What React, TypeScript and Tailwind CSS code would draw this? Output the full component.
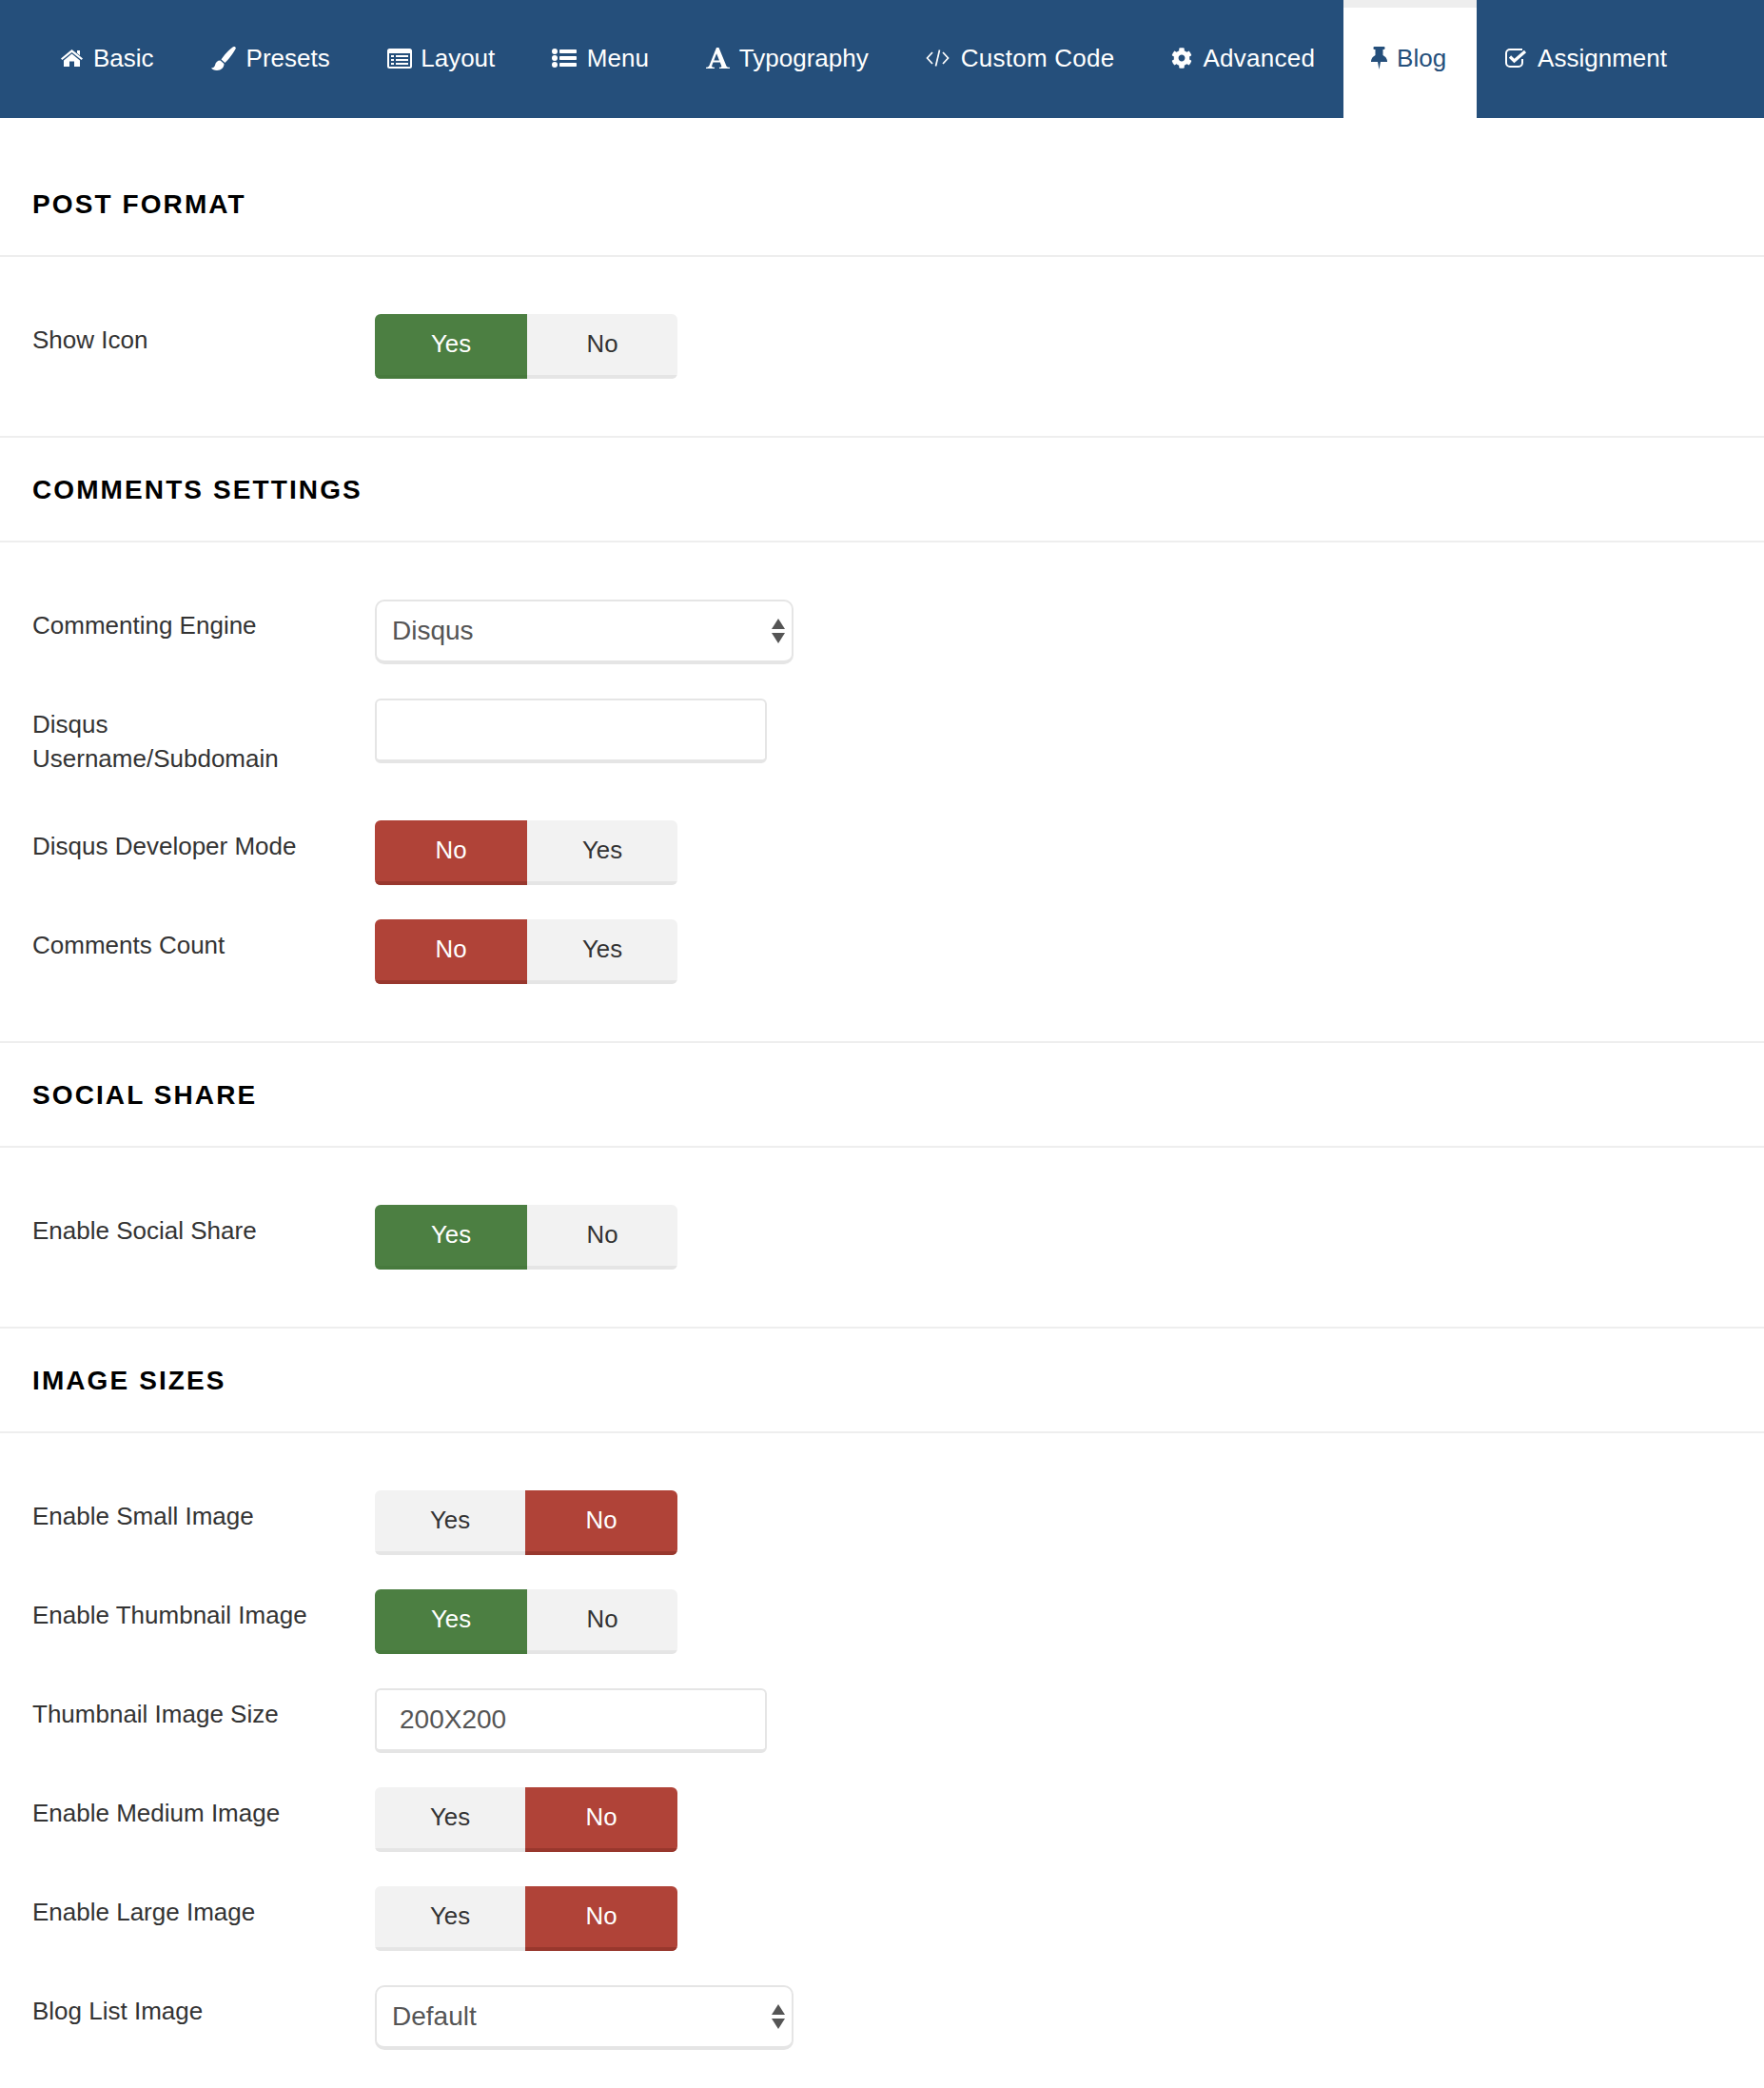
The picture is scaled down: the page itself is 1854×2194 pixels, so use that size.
import React from "react";
import { FaCog } from "react-icons/fa";

const font = "font-['Liberation_Sans',Arial,sans-serif]";

const HomeIcon = () => (
  <svg className="w-[23px] h-[18px] mr-[11px] shrink-0" viewBox="0 0 23 18" fill="currentColor">
    <path d="M11.5 0 L23 9.5 L21.6 11 L11.5 3 L1.4 11 L0 9.5 Z" />
    <path d="M17 1h3v5.3l-3-2.5z" />
    <path d="M11.5 4.6 L20 11.6 V18 H14 V12.5 H9 V18 H3 V11.6 Z" />
  </svg>
);

const BrushIcon = () => (
  <svg className="w-[26px] h-[25px] mr-[11px] shrink-0" viewBox="0 0 26 25" fill="currentColor">
    <path d="M24 0 C25.5 0 26.3 1.2 25.5 2.6 C23 7 18 14 14.5 17 L10.5 13.5 C13 9.5 19 3 22 1 C22.7 .4 23.3 0 24 0Z" />
    <path d="M9.5 14.5 L13.5 18 C13.5 22 10.5 25 6 25 C3 25 1 24 0 22.5 C2 22.5 3.5 21.5 4 19.5 C4.5 16.5 6.5 14.5 9.5 14.5Z" />
  </svg>
);

const ListAltIcon = () => (
  <svg className="w-[26px] h-[21px] mr-[9.5px] shrink-0" viewBox="0 0 26 21" fill="currentColor">
    <path
      fillRule="evenodd"
      d="M2.5 0 H23.5 A2.5 2.5 0 0 1 26 2.5 V18.5 A2.5 2.5 0 0 1 23.5 21 H2.5 A2.5 2.5 0 0 1 0 18.5 V2.5 A2.5 2.5 0 0 1 2.5 0Z M2 5 V18.5 A.5 .5 0 0 0 2.5 19 H23.5 A.5 .5 0 0 0 24 18.5 V5Z"
    />
    <rect x="4" y="7" width="3" height="2" />
    <rect x="4" y="11" width="3" height="2" />
    <rect x="4" y="15" width="3" height="2" />
    <rect x="9" y="7" width="13" height="2" />
    <rect x="9" y="11" width="13" height="2" />
    <rect x="9" y="15" width="13" height="2" />
  </svg>
);

const ListIcon = () => (
  <svg className="w-[26px] h-[20px] mr-[10.5px] shrink-0" viewBox="0 0 26 20" fill="currentColor">
    <circle cx="3" cy="3" r="3" />
    <circle cx="3" cy="10" r="3" />
    <circle cx="3" cy="17" r="3" />
    <rect x="8" y="1" width="18" height="4" rx="0.8" />
    <rect x="8" y="8" width="18" height="4" rx="0.8" />
    <rect x="8" y="15" width="18" height="4" rx="0.8" />
  </svg>
);

const FontIcon = () => (
  <svg className="w-[25px] h-[22px] mr-[10px] shrink-0" viewBox="0 0 25 22" fill="currentColor">
    <path
      fillRule="evenodd"
      d="M11 0 H13.5 L21.5 19.5 C22 20.4 23 20.7 25 20.8 V22 H14 V20.8 C16 20.7 16.6 20.3 16.2 19.2 L14.8 15.5 H7.5 L6.2 19 C5.8 20.2 6.8 20.7 9 20.8 V22 H0 V20.8 C1.8 20.7 2.8 20.2 3.4 19 Z M8.3 13.5 H14 L11.1 6.2 Z"
    />
  </svg>
);

const CodeIcon = () => (
  <svg className="w-[25px] h-[18px] mr-[12px] shrink-0" viewBox="0 0 25 18" fill="none" stroke="currentColor" strokeWidth="1.7">
    <path d="M7 3 L1.5 9 L7 15" />
    <path d="M18 3 L23.5 9 L18 15" />
    <path d="M14.5 .5 L10.5 17.5" />
  </svg>
);

const PinIcon = () => (
  <svg className="w-[17px] h-[24px] mr-[10px] shrink-0" viewBox="0 0 17 24" fill="currentColor">
    <path d="M3.5 0 H13.5 Q14.5 0 14.5 1 V2 Q14.5 3 13.5 3 H12.5 V9 Q16.5 11 17 15 V16 H10 L8.5 24 L7 16 H0 V15 Q.5 11 4.5 9 V3 H3.5 Q2.5 3 2.5 2 V1 Q2.5 0 3.5 0Z" />
  </svg>
);

const CheckSquareIcon = () => (
  <svg className="w-[23px] h-[20px] mr-[11px] shrink-0" viewBox="0 0 23 20" fill="none" stroke="currentColor">
    <path strokeWidth="2" d="M18 1 H5 a4 4 0 0 0 -4 4 V15 a4 4 0 0 0 4 4 H14 a4 4 0 0 0 4 -4 V11" />
    <path strokeWidth="3.2" d="M5 8.5 L9.5 13 L21 3" />
  </svg>
);

const tabs = [
  { label: "Basic", icon: <HomeIcon /> },
  { label: "Presets", icon: <BrushIcon /> },
  { label: "Layout", icon: <ListAltIcon /> },
  { label: "Menu", icon: <ListIcon /> },
  { label: "Typography", icon: <FontIcon /> },
  { label: "Custom Code", icon: <CodeIcon />, wide: true },
  { label: "Advanced", icon: <FaCog className="w-[22px] h-[22px] mr-[11px] shrink-0" />, wide: true },
  { label: "Blog", icon: <PinIcon />, active: true },
  { label: "Assignment", icon: <CheckSquareIcon /> },
];

function Tab({ label, icon, active, wide }: { label: string; icon: React.ReactNode; active?: boolean; wide?: boolean }) {
  return (
    <a
      className={
        active
          ? "flex items-center w-[140px] h-[124px] pb-[10px] pl-[29px] bg-white border-t-[8px] border-[#eeeeee] text-[#254f7b]"
          : "flex items-center h-[124px] pb-[2px] px-[30px] text-white"
      }
    >
      {icon}
      <span className={wide ? "tracking-[0.25px]" : ""}>{label}</span>
    </a>
  );
}

function Toggle({ options, active }: { options: [string, string]; active: 0 | 1 }) {
  const tone = options[active] === "Yes" ? "green" : "red";
  const on =
    tone === "green"
      ? "bg-[#4c7f42] border-b-[4px] border-[#477a3d] text-white"
      : "bg-[#b04338] border-b-[4px] border-[#98372d] text-white";
  const off = "bg-[#f2f2f2] border-b-[4px] border-[#e5e5e5] text-[#333333]";
  return (
    <div className="flex w-[318px] h-[68px] rounded-[6px] overflow-hidden text-[25.8px]">
      <button className={`h-full pb-[1px] flex items-center justify-center ${active === 0 ? "w-[160px] " + on : "w-[158px] " + off}`}>{options[0]}</button>
      <button className={`h-full pb-[1px] flex items-center justify-center ${active === 1 ? "w-[160px] " + on : "w-[158px] " + off}`}>{options[1]}</button>
    </div>
  );
}

function Select({ value }: { value: string }) {
  return (
    <div className="relative w-[440px] h-[68px]">
      <select
        defaultValue={value}
        className="w-full h-full appearance-none bg-white border-2 border-b-[4px] border-[#e5e5e5] rounded-[10px] pl-[16px] text-[28px] text-[#555555] outline-none"
      >
        <option>{value}</option>
      </select>
      <svg className="absolute right-[9px] top-[20px] w-[14px] h-[26px]" viewBox="0 0 14 26" fill="#555555">
        <path d="M7 0 L14 11 L0 11 Z" />
        <path d="M0 15 L14 15 L7 26 Z" />
      </svg>
    </div>
  );
}

function TextInput({ value }: { value?: string }) {
  return (
    <input
      readOnly
      value={value ?? ""}
      className="block w-[412px] h-[68px] bg-white border-2 border-b-[4px] border-[#e5e5e5] rounded-[6px] pl-[24px] text-[28px] text-[#555555] outline-none"
    />
  );
}

function Row({ label, children }: { label: string; children: React.ReactNode }) {
  return (
    <div className="flex mb-[36px]">
      <label className="w-[330px] mr-[30px] pt-[9px] pb-[11px] leading-[36px] text-[26px] text-[#333333] shrink-0">{label}</label>
      {children}
    </div>
  );
}

function Heading({ children }: { children: React.ReactNode }) {
  return (
    <h3 className="h-[110px] flex items-center pl-[34px] pt-[1px] border-b-2 border-[#eeeeee] text-[28px] font-bold text-black tracking-[2.1px] uppercase">
      {children}
    </h3>
  );
}

function Section({ title, children }: { title: string; children: React.ReactNode }) {
  return (
    <section>
      <Heading>{title}</Heading>
      <div className="pt-[60px] pb-[24px] pl-[34px] border-b-2 border-[#eeeeee]">{children}</div>
    </section>
  );
}

export default function App() {
  return (
    <div className={`${font} bg-white min-h-[2194px] w-[1854px] overflow-hidden`}>
      <nav className="flex h-[124px] bg-[#254f7b] pl-[34px] text-[26px]">
        {tabs.map((t) => (
          <Tab key={t.label} {...t} />
        ))}
      </nav>
      <div className="pt-[36px]">
        <Section title="Post Format">
          <Row label="Show Icon"><Toggle options={["Yes", "No"]} active={0} /></Row>
        </Section>
        <Section title="Comments Settings">
          <Row label="Commenting Engine"><Select value="Disqus" /></Row>
          <Row label="Disqus Username/Subdomain"><TextInput /></Row>
          <Row label="Disqus Developer Mode"><Toggle options={["No", "Yes"]} active={0} /></Row>
          <Row label="Comments Count"><Toggle options={["No", "Yes"]} active={0} /></Row>
        </Section>
        <Section title="Social Share">
          <Row label="Enable Social Share"><Toggle options={["Yes", "No"]} active={0} /></Row>
        </Section>
        <section>
          <Heading>Image Sizes</Heading>
          <div className="pt-[60px] pl-[34px]">
            <Row label="Enable Small Image"><Toggle options={["Yes", "No"]} active={1} /></Row>
            <Row label="Enable Thumbnail Image"><Toggle options={["Yes", "No"]} active={0} /></Row>
            <Row label="Thumbnail Image Size"><TextInput value="200X200" /></Row>
            <Row label="Enable Medium Image"><Toggle options={["Yes", "No"]} active={1} /></Row>
            <Row label="Enable Large Image"><Toggle options={["Yes", "No"]} active={1} /></Row>
            <Row label="Blog List Image"><Select value="Default" /></Row>
          </div>
        </section>
      </div>
    </div>
  );
}
